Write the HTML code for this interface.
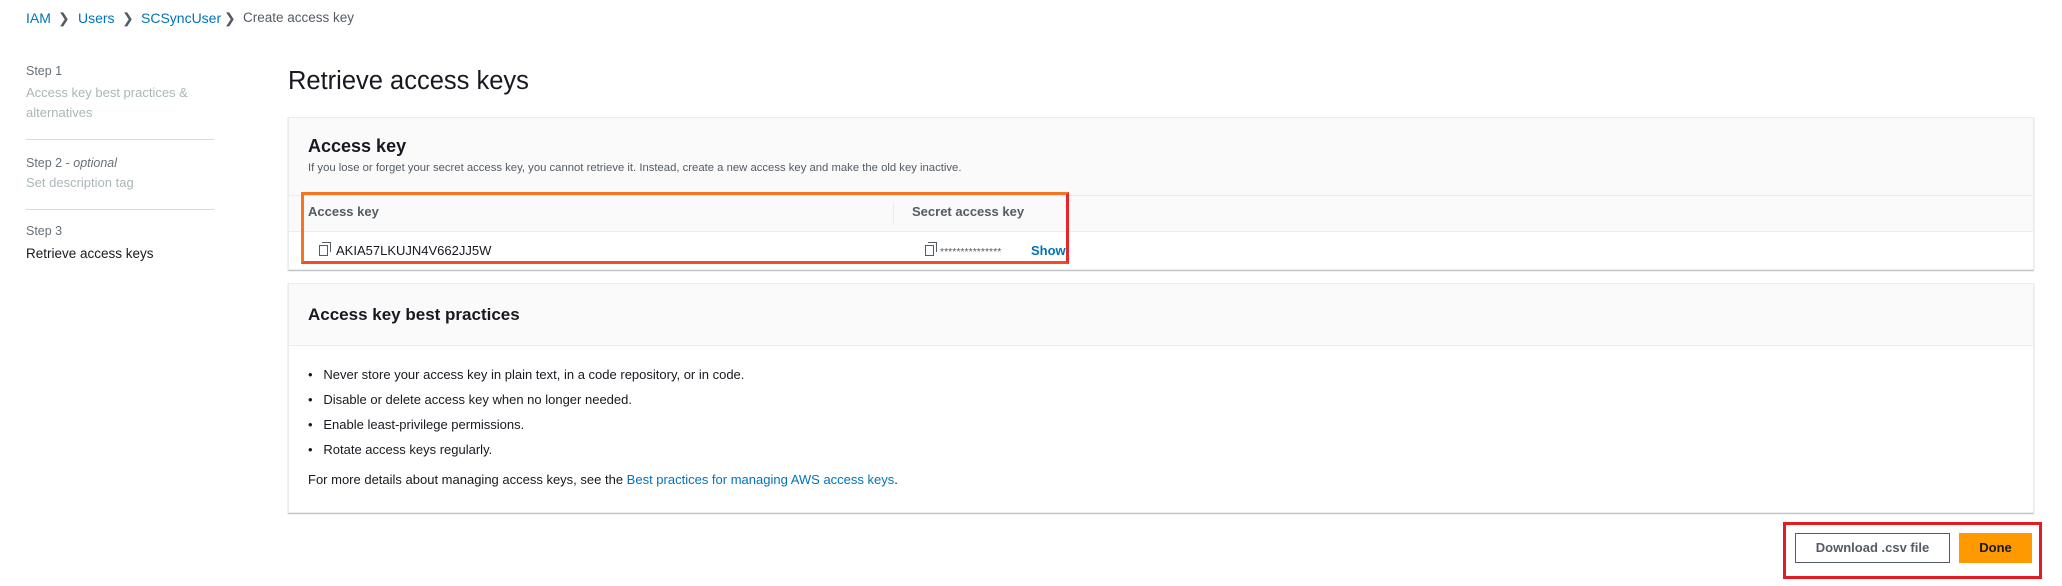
<!DOCTYPE html>
<html><head><meta charset="utf-8"><style>
*{box-sizing:border-box;margin:0;padding:0}
body{width:2062px;height:586px;background:#fff;font-family:"Liberation Sans",sans-serif;color:#16191f;position:relative;overflow:hidden}
.a{position:absolute;white-space:nowrap}
.bc{top:10px;font-size:14px;color:#0073bb}
.nav{font-size:12.5px;color:#687078}
.navl{font-size:13px;color:#aab7b8}
.div{position:absolute;left:26px;width:188px;height:1px;background:#d5dbdb}
.panel{position:absolute;left:288px;width:1746px;border:1px solid #eaeded;box-shadow:0 1px 1px 0 rgba(0,28,36,.3);background:#fff}
.copy{position:absolute;width:9px;height:11px;border:1.5px solid #545b64}
.copy:before{content:"";position:absolute;left:2px;top:-4px;width:8px;height:9px;border-top:1.5px solid #545b64;border-right:1.5px solid #545b64}
li{list-style:none}
</style></head><body>
<div class="a bc" style="left:26px">IAM</div>
<div class="a bc" style="left:58px;color:#545b64">&#x276F;</div>
<div class="a bc" style="left:78px">Users</div>
<div class="a bc" style="left:122px;color:#545b64">&#x276F;</div>
<div class="a bc" style="left:141px">SCSyncUser</div>
<div class="a bc" style="left:224px;color:#545b64">&#x276F;</div>
<div class="a bc" style="left:243px;color:#545b64;font-size:13.5px">Create access key</div>

<div class="a nav" style="left:26px;top:64px">Step 1</div>
<div class="a navl" style="left:26px;top:85px">Access key best practices &amp;</div>
<div class="a navl" style="left:26px;top:105px">alternatives</div>
<div class="div" style="top:139px"></div>
<div class="a nav" style="left:26px;top:156px">Step 2 - <i>optional</i></div>
<div class="a navl" style="left:26px;top:175px">Set description tag</div>
<div class="div" style="top:209px"></div>
<div class="a nav" style="left:26px;top:224px">Step 3</div>
<div class="a" style="left:26px;top:246px;font-size:13.5px;color:#16191f">Retrieve access keys</div>

<div class="a" style="left:288px;top:67px;font-size:25.5px;color:#16191f">Retrieve access keys</div>

<div class="panel" style="top:117px;height:153px;background:#fafafa">
 <div class="a" style="left:19px;top:18px;font-size:18px;font-weight:bold">Access key</div>
 <div class="a" style="left:19px;top:44px;font-size:11.3px;color:#545b64">If you lose or forget your secret access key, you cannot retrieve it. Instead, create a new access key and make the old key inactive.</div>
 <div style="position:absolute;left:0;right:0;top:77px;height:1px;background:#eaeded"></div>
 <div style="position:absolute;left:0;right:0;top:113px;bottom:0;background:#fff;border-top:1px solid #eaeded"></div>
 <div class="a" style="left:19px;top:86px;font-size:13px;font-weight:bold;color:#545b64">Access key</div>
 <div style="position:absolute;left:604px;top:85px;width:1px;height:22px;background:#eaeded"></div>
 <div class="a" style="left:623px;top:86px;font-size:13px;font-weight:bold;color:#545b64">Secret access key</div>
 <div class="copy" style="left:30px;top:127px"></div>
 <div class="a" style="left:47px;top:125px;font-size:13px">AKIA57LKUJN4V662JJ5W</div>
 <div class="copy" style="left:636px;top:127px"></div>
 <div class="a" style="left:651px;top:128px;font-size:10.5px;color:#545b64">***************</div>
 <div class="a" style="left:742px;top:125px;font-size:13px;font-weight:bold;color:#0073bb">Show</div>
</div>
<div style="position:absolute;left:301px;top:192px;width:768px;height:72px;border:3px solid #f47625;border-right-color:#e8262a;border-bottom-color:#f04d24"></div>

<div class="panel" style="top:283px;height:230px">
 <div style="position:absolute;left:0;right:0;top:0;height:62px;background:#fafafa;border-bottom:1px solid #eaeded"></div>
 <div class="a" style="left:19px;top:21px;font-size:17px;font-weight:bold">Access key best practices</div>
 <ul>
 <li class="a" style="left:19px;top:83px;font-size:13px">&bull;&nbsp;&nbsp; Never store your access key in plain text, in a code repository, or in code.</li>
 <li class="a" style="left:19px;top:108px;font-size:13px">&bull;&nbsp;&nbsp; Disable or delete access key when no longer needed.</li>
 <li class="a" style="left:19px;top:133px;font-size:13px">&bull;&nbsp;&nbsp; Enable least-privilege permissions.</li>
 <li class="a" style="left:19px;top:158px;font-size:13px">&bull;&nbsp;&nbsp; Rotate access keys regularly.</li>
 </ul>
 <div class="a" style="left:19px;top:188px;font-size:13px">For more details about managing access keys, see the <span style="color:#0073bb">Best practices for managing AWS access keys</span>.</div>
</div>

<div style="position:absolute;left:1783px;top:522px;width:259px;height:57px;border:3px solid #e31b23"></div>
<div style="position:absolute;left:1795px;top:533px;width:155px;height:30px;border:1px solid #545b64;font-size:13px;font-weight:bold;color:#545b64;text-align:center;line-height:28px">Download .csv file</div>
<div style="position:absolute;left:1959px;top:533px;width:73px;height:30px;background:#ff9900;font-size:13px;font-weight:bold;color:#16191f;text-align:center;line-height:30px">Done</div>
</body></html>
